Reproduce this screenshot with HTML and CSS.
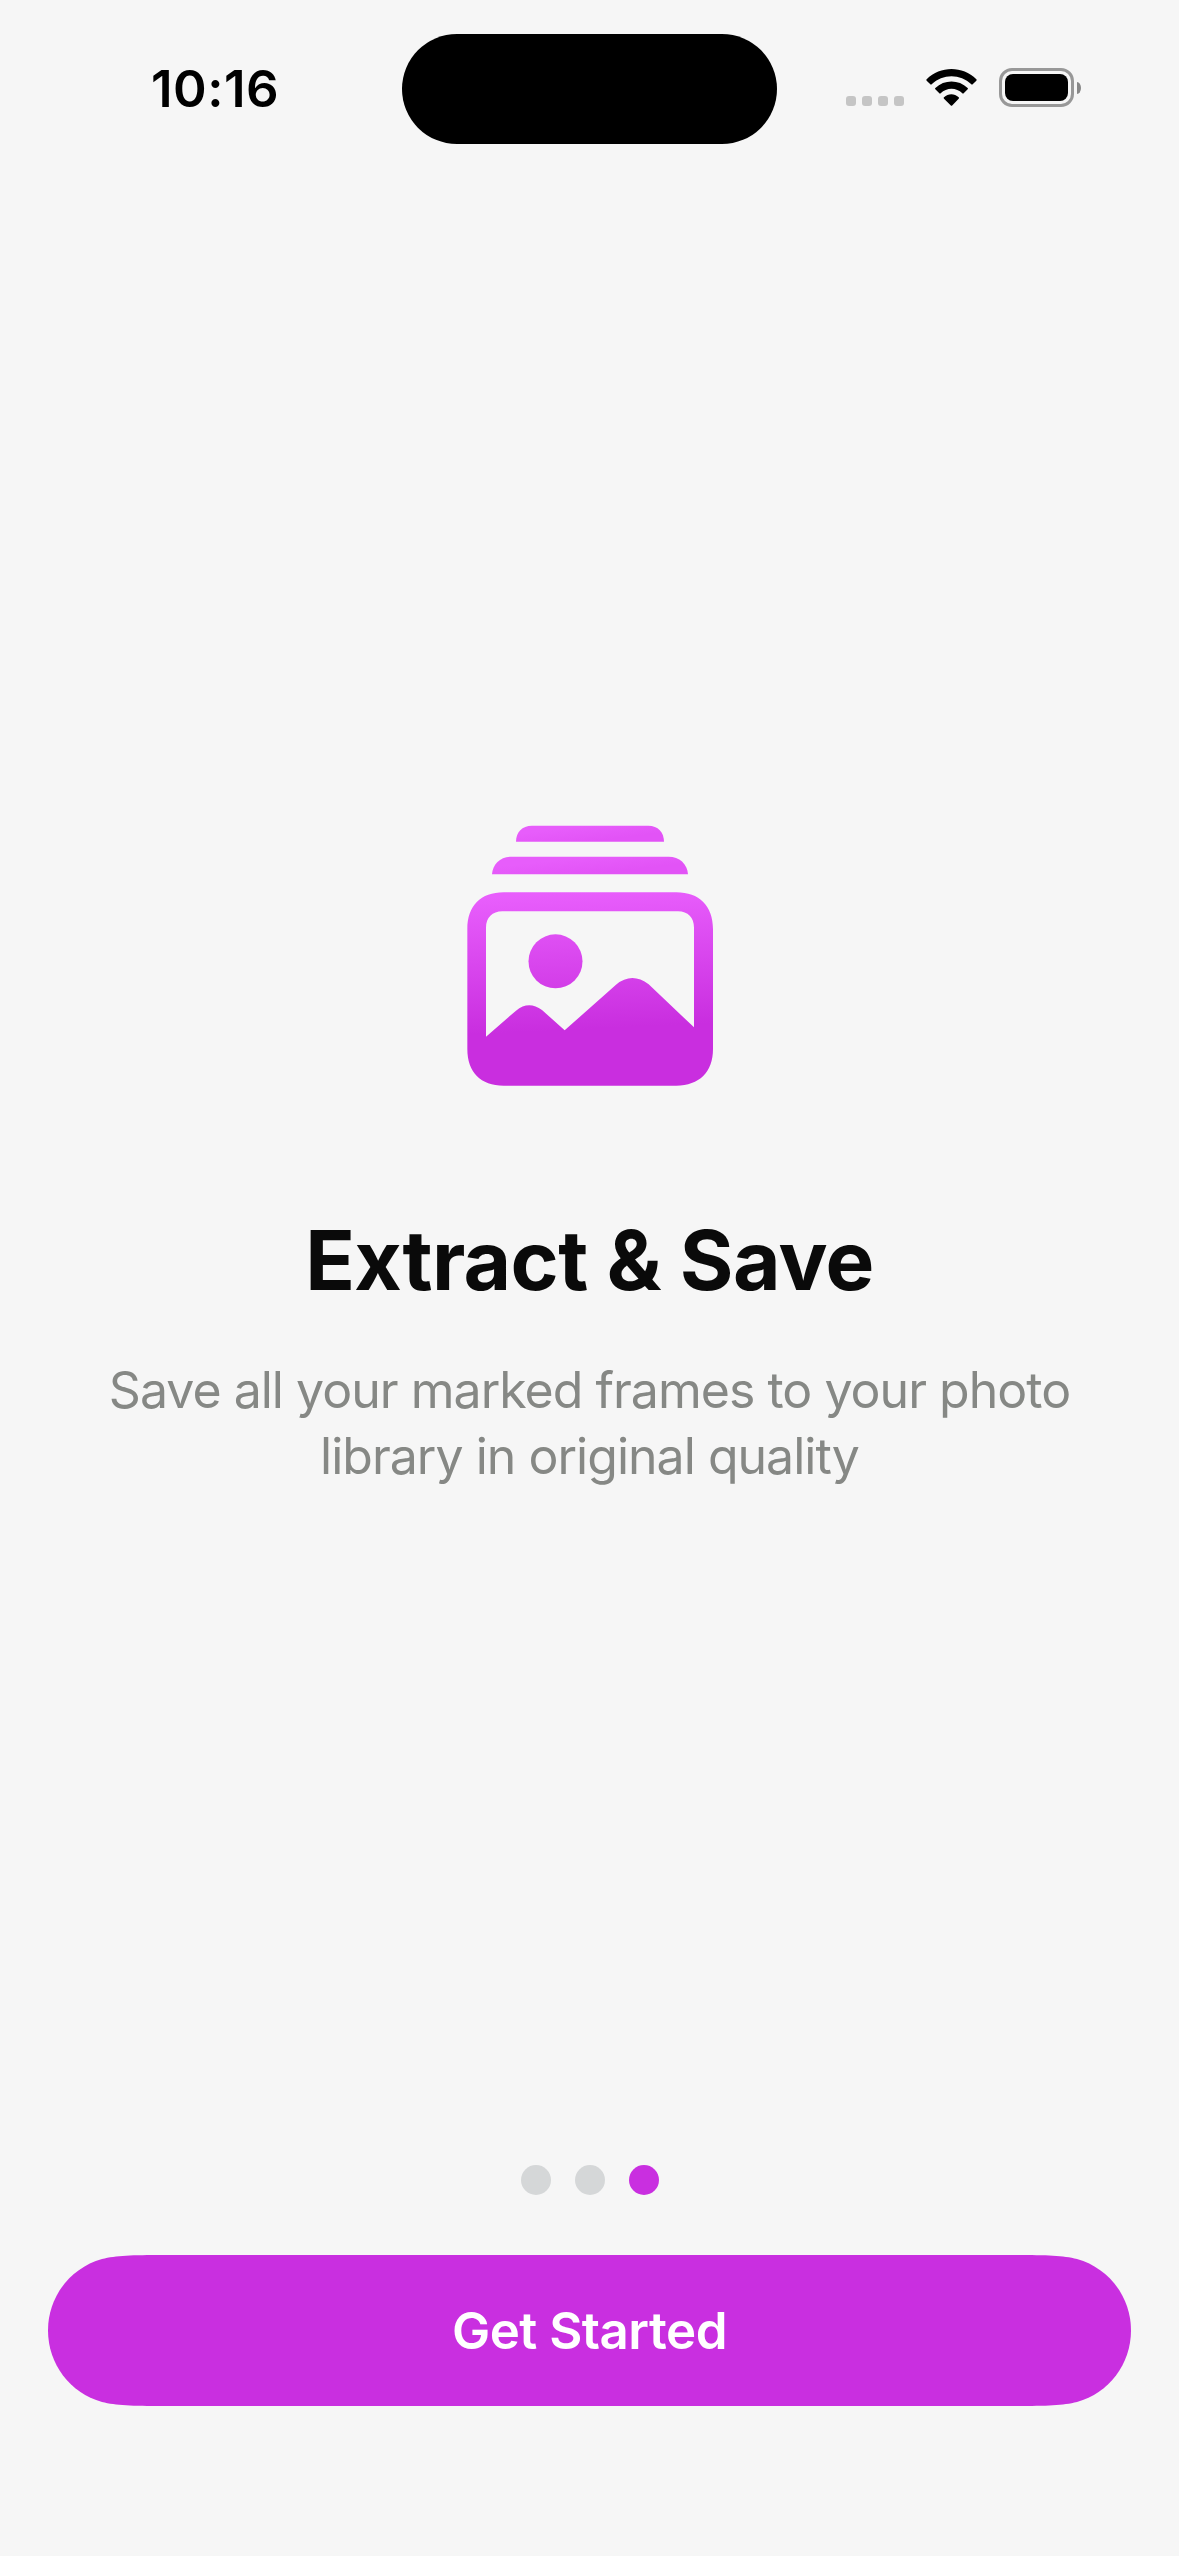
FILE: index.html
```html
<!DOCTYPE html>
<html lang="en">
<head>
<meta charset="utf-8">
<title>Extract &amp; Save</title>
<link rel="stylesheet" href="styles.css">
</head>
<body>
<div class="screen">
  <header class="status">
    <div class="status-time">10:16</div>
    <div class="island"></div>
    <div class="status-icons">
      <div class="signal"><i></i><i></i><i></i><i></i></div>
      <svg class="wifi" viewBox="0 0 153 111" aria-hidden="true">
        <path d="M2 31Q0 33 2 35L13 46Q15 48 17 46C50 14 103 14 136 46Q138 48 140 46L151 35Q153 33 151 31C110-10 43-10 2 31Z"/>
        <path d="M28 57Q26 59 28 61L40 73Q42 75 44 73C62 55 91 55 109 73Q111 75 113 73L125 61Q127 59 125 57C98 31 55 31 28 57Z"/>
        <path d="M54 85Q52 87 54 89L74.500 109.500Q76.500 111.500 78.500 109.500L98 89Q100 87 98 85C85 73 67 73 54 85Z"/>
      </svg>
      <div class="battery"><div class="battery-case"><div class="battery-fill"></div></div><div class="battery-tip"></div></div>
    </div>
  </header>

  <main class="page">
    <svg class="hero" viewBox="50 44 738 783" aria-hidden="true">
      <defs>
        <linearGradient id="bar-top" gradientUnits="userSpaceOnUse" x1="410" y1="45" x2="416" y2="94"><stop offset="0" stop-color="#e75dfb"/><stop offset="1" stop-color="#e253f6"/></linearGradient>
        <linearGradient id="bar-mid" gradientUnits="userSpaceOnUse" x1="410" y1="139" x2="416" y2="192"><stop offset="0" stop-color="#e75dfb"/><stop offset="1" stop-color="#e253f6"/></linearGradient>
        <linearGradient id="frame" gradientUnits="userSpaceOnUse" x1="410" y1="246" x2="430" y2="655"><stop offset="0" stop-color="#e85efc"/><stop offset="1" stop-color="#c92edf"/></linearGradient>
      </defs>
      <path fill="url(#bar-top)" d="M197 94C197 66 215 46 245 46H594C623 46 641 66 641 94Z"/>
      <path fill="url(#bar-mid)" d="M125 192C127 160 151 139 184 139H655C687 139 711 160 713 192Z"/>
      <path fill="url(#frame)" fill-rule="evenodd" d="M160 246H678C747 246 788 287 788 356V716C788 785 747 826 678 826H160C91 826 51 785 51 716V356C51 287 91 246 160 246ZM107 679L197 601Q235 570 275 599L343 660L497 523Q545 484 595 522L731 651V352C731 322 713 303 683 303H156C126 303 107 322 107 352Z"/>
      <circle fill="url(#frame)" cx="315.500" cy="453" r="81"/>
    </svg>
    <h1 class="title">Extract &amp; Save</h1>
    <p class="text">Save all your marked frames to your photo<br>library in original quality</p>
  </main>

  <footer class="footer">
    <div class="dots"><i></i><i></i><i class="active"></i></div>
    <button class="cta">Get Started</button>
  </footer>
</div>
</body>
</html>
```

FILE: styles.css
```css
* { box-sizing: border-box; }
body { margin: 0; background: #f6f6f6; font-family: Inter, "Liberation Sans", sans-serif; }
.screen { width: 1179px; height: 2556px; display: flex; flex-direction: column; background: #f6f6f6; overflow: hidden; }

.status { display: grid; grid-template-columns: 402px 375px 402px; height: 177px; padding-top: 33px; align-items: start; }
.status-time { height: 111px; line-height: 111px; padding-left: 151px; font-size: 51px; font-weight: 600; letter-spacing: 0.5px; color: #000; white-space: nowrap; }
.island { height: 110px; margin-top: 1px; border-radius: 55px; background: #000; }
.status-icons { display: flex; align-items: flex-start; padding: 35px 0 0 69px; }
.signal { display: flex; gap: 6px; margin-top: 28px; }
.signal i { width: 10px; height: 10px; border-radius: 3px; background: #c5c5c5; }
.wifi { width: 51px; height: 37px; margin: 1px 22px 0 22px; }
.battery { display: flex; align-items: center; gap: 3px; }
.battery-case { width: 75px; height: 39px; padding: 3px; border: 3px solid #989898; border-radius: 13px; }
.battery-fill { height: 27px; border-radius: 8px; background: #000; }
.battery-tip { width: 4px; height: 12px; border-radius: 0 4px 4px 0 / 0 6px 6px 0; background: #888; }

.page { flex: 1; display: flex; flex-direction: column; align-items: center; padding-top: 648px; }
.hero { display: block; width: 246px; height: 261px; }
.title { margin: 115px 0 0; font-size: 82px; line-height: 120px; font-weight: 700; letter-spacing: -0.6px; color: #0a0a0a; white-space: nowrap; }
.text { margin: 36px 0 0; font-size: 50px; line-height: 66px; font-weight: 400; letter-spacing: -0.98px; color: #868885; text-align: center; white-space: nowrap; }

.footer { height: 391px; padding: 0 48px; display: flex; flex-direction: column; }
.dots { display: flex; justify-content: center; gap: 24px; padding-bottom: 60px; }
.dots i { width: 30px; height: 30px; border-radius: 50%; background: #d5d7d8; }
.dots .active { background: #c92fe0; }
.cta { width: 1083px; height: 151px; border: 0; padding: 0; background: #c92fe0; color: #fff; font: 600 51px/60px Inter, "Liberation Sans", sans-serif; letter-spacing: -0.5px;
  clip-path: path("M115 0H968C999 0 1015 .5 1029 4C1061 13 1083 42 1083 75.500C1083 109 1061 138 1029 147C1015 150.500 999 151 968 151H115C84 151 68 150.500 54 147C22 138 0 109 0 75.500C0 42 22 13 54 4C68 .5 84 0 115 0Z"); }
```
